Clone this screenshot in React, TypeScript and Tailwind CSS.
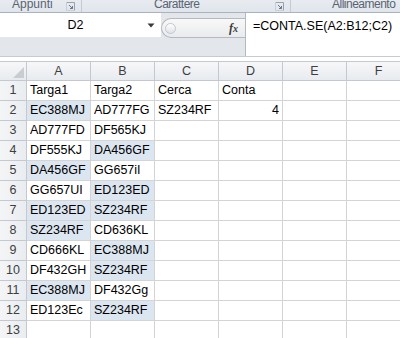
import React from 'react';

/**
 * Spreadsheet row: values for columns A..F
 */
type Row = string[];

const COLS = ['A', 'B', 'C', 'D', 'E', 'F'];

const rows: Row[] = [
  ['Targa1', 'Targa2', 'Cerca', 'Conta', '', ''],
  ['EC388MJ', 'AD777FG', 'SZ234RF', '4', '', ''],
  ['AD777FD', 'DF565KJ', '', '', '', ''],
  ['DF555KJ', 'DA456GF', '', '', '', ''],
  ['DA456GF', 'GG657iI', '', '', '', ''],
  ['GG657UI', 'ED123ED', '', '', '', ''],
  ['ED123ED', 'SZ234RF', '', '', '', ''],
  ['SZ234RF', 'CD636KL', '', '', '', ''],
  ['CD666KL', 'EC388MJ', '', '', '', ''],
  ['DF432GH', 'SZ234RF', '', '', '', ''],
  ['EC388MJ', 'DF432Gg', '', '', '', ''],
  ['ED123Ec', 'SZ234RF', '', '', '', ''],
  ['', '', '', '', '', ''],
];

// duplicated plates in A2:B12 get the light blue fill
const isDup = (r: number, c: number): boolean => {
  if (r < 1 || r > 11 || c > 1) return false;
  const v = rows[r][c].toUpperCase();
  let n = 0;
  for (let i = 1; i <= 11; i++) {
    for (let j = 0; j < 2; j++) {
      if (rows[i][j].toUpperCase() === v) n++;
    }
  }
  return n > 1;
};

const Launcher = () => (
  <svg width="9" height="9" viewBox="0 0 9 9" className="shrink-0">
    <path d="M0.5 0.5H8.5V8.5" fill="none" stroke="#9aa3ad" strokeWidth="1" />
    <path d="M0.5 0.5V8.5H8.5" fill="none" stroke="#c8ced6" strokeWidth="1" />
    <path d="M3 3L6.5 6.5M4 6.5H6.5V4" fill="none" stroke="#6d7782" strokeWidth="1" />
  </svg>
);

export default function App() {
  return (
    <div
      className="w-[400px] h-[338px] overflow-hidden bg-white select-none"
      style={{ fontFamily: '"Liberation Sans", Arial, sans-serif' }}
    >
      {/* ribbon group labels */}
      <div className="h-[13px] flex bg-gradient-to-b from-[#e8ecf1] to-[#e0e5ec] border-b border-[#a9b2be] text-[12px] text-[#5a6370] overflow-hidden">
        <div className="w-[82px] flex items-start border-r border-[#c3cad3] pl-[12px] pr-[6px]">
          <span className="leading-none -mt-[2px] flex-1">Appunti</span>
          <div className="mt-[2px]">
            <Launcher />
          </div>
        </div>
        <div className="w-[209px] flex items-start border-r border-[#c3cad3] pr-[6px]">
          <span className="leading-none -mt-[2px] flex-1 pl-[72px] tracking-[-0.5px]">Carattere</span>
          <div className="mt-[2px]">
            <Launcher />
          </div>
        </div>
        <div className="flex-1 flex items-start pl-[41px]">
          <span className="leading-none -mt-[2px] tracking-[-0.5px] whitespace-nowrap">Allineamento</span>
        </div>
      </div>

      {/* formula bar */}
      <div className="h-[44px] flex bg-[#e3e6ea] border-b border-[#c6cbd2]">
        <div className="w-[245px] flex flex-col">
          <div className="h-[24px] flex items-center">
            <div className="w-[161px] h-full bg-white flex items-center">
              <span className="flex-1 text-center text-[12.5px] text-black pl-[4px]">D2</span>
              <svg width="8" height="5" viewBox="0 0 8 5" className="mr-[6px]">
                <path d="M0.5 0.5H7.5L4 4.5Z" fill="#3a3a3a" />
              </svg>
            </div>
            <div className="flex-1 h-[20px] self-end -mb-[1px] relative flex items-center justify-end rounded-l-[10px] border border-r-0 border-[#b4b9c0] bg-gradient-to-b from-[#f8f8f8] to-[#e9ebee] pr-[7px]">
              <div className="absolute left-[3px] top-[4px] w-[11px] h-[11px] rounded-full border border-[#c3c7cc] bg-gradient-to-b from-[#ffffff] to-[#dfe2e6]" />
              <span
                className="italic font-bold text-[12px] text-[#3a3a3a] leading-none"
                style={{ fontFamily: '"Liberation Serif", "Times New Roman", serif' }}
              >
                f<span className="text-[10px]">x</span>
              </span>
            </div>
          </div>
          <div className="flex-1" />
        </div>
        <div className="flex-1 bg-white border-l border-[#b4b9c0] pl-[7px] pt-[5px] text-[12.5px] text-black leading-[16px] whitespace-nowrap">
          =CONTA.SE(A2:B12;C2)
        </div>
      </div>

      {/* gap strip */}
      <div className="h-[4px] bg-white" />

      {/* grid */}
      <div className="grid grid-cols-[27px_64px_64px_64px_64px_64px_64px] text-[12.5px]">
        {/* header row */}
        <div className="h-[20px] bg-gradient-to-b from-[#f6f7f9] to-[#e8ebef] border-t border-r border-b border-[#c4c9d0] relative">
          <svg width="11" height="11" viewBox="0 0 11 11" className="absolute right-[2px] bottom-[2px]">
            <path d="M11 0V11H0Z" fill="#c9cdd2" />
          </svg>
        </div>
        {COLS.map((c) => (
          <div
            key={c}
            className="h-[20px] flex items-center justify-center bg-gradient-to-b from-[#f6f7f9] to-[#e8ebef] border-t border-r border-b border-[#c4c9d0] text-[#3e3e3e]"
          >
            {c}
          </div>
        ))}

        {rows.map((row, r) => (
          <React.Fragment key={r}>
            <div className="h-[20px] flex items-center justify-center bg-gradient-to-r from-[#f4f5f7] to-[#eaedf0] border-r border-b border-[#c4c9d0] text-[#3e3e3e]">
              {r + 1}
            </div>
            {row.map((v, c) => {
              const numeric = v !== '' && !isNaN(Number(v));
              return (
                <div
                  key={c}
                  className={`h-[20px] flex items-center px-[3px] border-r border-b border-[#d4d4d4] text-black whitespace-nowrap overflow-visible ${
                    numeric ? 'justify-end' : 'justify-start'
                  } ${isDup(r, c) ? 'bg-[#dce6f1]' : 'bg-white'}`}
                >
                  {v}
                </div>
              );
            })}
          </React.Fragment>
        ))}
      </div>
    </div>
  );
}
